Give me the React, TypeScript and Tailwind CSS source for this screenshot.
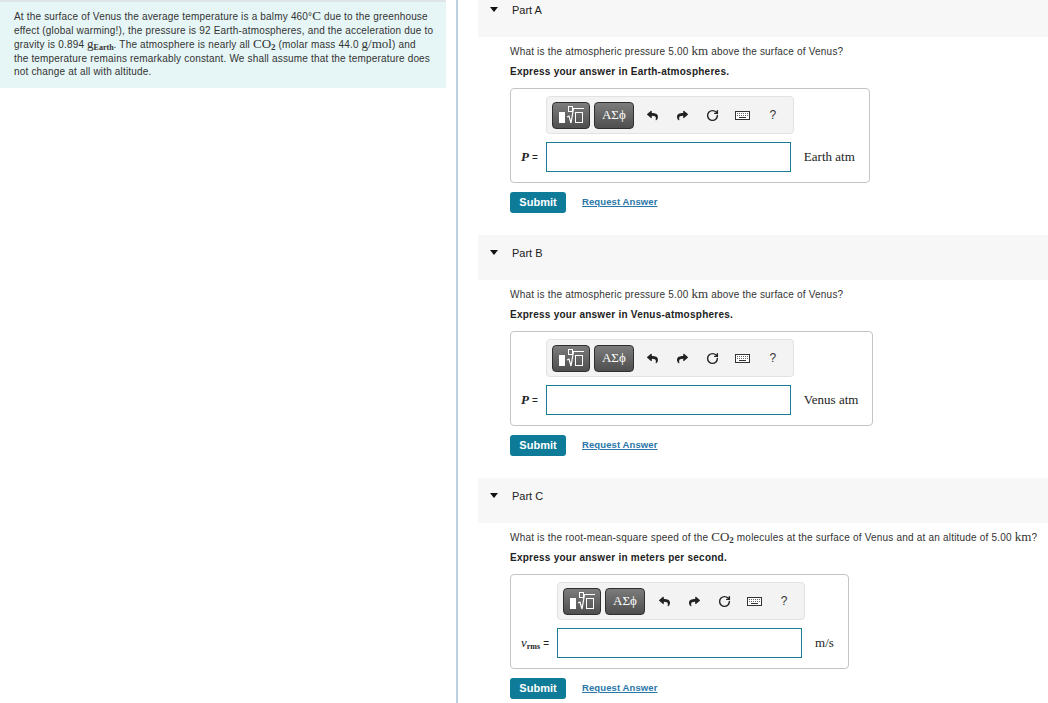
import type { ReactNode } from 'react';
import { FaReply, FaShare } from 'react-icons/fa';
import { RotateCw } from 'lucide-react';

const serif = "font-['Liberation_Serif','DejaVu_Serif',serif]";

function M({ children }: { children: ReactNode }) {
  return <span className={`${serif} text-[13px] leading-[10px] tracking-normal`}>{children}</span>;
}

function RadicalIcon() {
  return (
    <svg width="28" height="20" viewBox="0 0 28 20" fill="none">
      <rect x="2" y="7" width="6" height="11" fill="#fff" />
      <rect x="11.5" y="1.5" width="4" height="5" stroke="#fff" strokeWidth="1" />
      <path d="M10 12 L12 11 L14 18 L16.5 3.5 L27 3.5" stroke="#fff" strokeWidth="1.2" />
      <rect x="18.5" y="7.5" width="7" height="10" stroke="#fff" strokeWidth="1" />
    </svg>
  );
}

function KeyboardIcon() {
  return (
    <svg width="15" height="9" viewBox="0 0 15 9" fill="none">
      <rect x="0.5" y="0.5" width="14" height="8" stroke="#333" strokeWidth="1" fill="#fff" />
      <path d="M2 2.5h11M2 4.5h11" stroke="#666" strokeWidth="1" strokeDasharray="1 1" />
      <path d="M4 6.5h7" stroke="#333" strokeWidth="1" />
    </svg>
  );
}

function Toolbar() {
  const btn =
    'flex h-[27px] items-center justify-center rounded-[4px] border border-[#2f2f2f] bg-gradient-to-b from-[#7c7c7c] to-[#4f4f4f]';
  return (
    <div className="flex h-[38px] w-[248px] items-center rounded-[4px] border border-[#e2e2e2] bg-[#f3f3f3] pl-[5px]">
      <div className={`${btn} w-[38px]`}>
        <RadicalIcon />
      </div>
      <div className={`${btn} ml-[4px] w-[40px]`}>
        <span className={`${serif} text-[13px] text-white`}>ΑΣϕ</span>
      </div>
      <div className="ml-[4px] flex items-center">
        <span className="flex w-[30px] justify-center">
          <FaReply size={11} color="#222" />
        </span>
        <span className="flex w-[30px] justify-center">
          <FaShare size={11} color="#222" />
        </span>
        <span className="flex w-[30px] justify-center">
          <RotateCw size={13} strokeWidth={2.6} color="#222" />
        </span>
        <span className="flex w-[30px] justify-center">
          <KeyboardIcon />
        </span>
        <span className="flex w-[30px] justify-center text-[12px] text-[#333]">?</span>
      </div>
    </div>
  );
}

type Part = {
  label: string;
  question: ReactNode;
  express: string;
  variable: ReactNode;
  unit: ReactNode;
};

const parts: Part[] = [
  {
    label: 'Part A',
    question: (
      <>
        What is the atmospheric pressure 5.00 <M>km</M> above the surface of Venus?
      </>
    ),
    express: 'Express your answer in Earth-atmospheres.',
    variable: <i className={`${serif} text-[13px] font-bold`}>P</i>,
    unit: 'Earth atm',
  },
  {
    label: 'Part B',
    question: (
      <>
        What is the atmospheric pressure 5.00 <M>km</M> above the surface of Venus?
      </>
    ),
    express: 'Express your answer in Venus-atmospheres.',
    variable: <i className={`${serif} text-[13px] font-bold`}>P</i>,
    unit: 'Venus atm',
  },
  {
    label: 'Part C',
    question: (
      <>
        What is the root-mean-square speed of the{' '}
        <M>
          CO<sub className="text-[9px] font-bold">2</sub>
        </M>{' '}
        molecules at the surface of Venus and at an altitude of 5.00 <M>km</M>?
      </>
    ),
    express: 'Express your answer in meters per second.',
    variable: (
      <span className={`${serif}`}>
        <i className="text-[13px]">v</i>
        <sub className="text-[8px] font-bold">rms</sub>
      </span>
    ),
    unit: 'm/s',
  },
];

function PartBlock({ part, first }: { part: Part; first: boolean }) {
  return (
    <section className={first ? '-mt-2' : ''}>
      <div className="flex h-[45px] items-start bg-[#f7f7f7] pt-[11px]">
        <span className="ml-[12px] mt-[4px] h-0 w-0 border-x-[4px] border-t-[5px] border-x-transparent border-t-[#111]" />
        <span className="ml-[14px] text-[11px] leading-[14px] text-[#222]">{part.label}</span>
      </div>

      <div className="pl-[32px] pb-[22px]">
        <p className="mt-[8px] h-[13px] text-[10px] leading-[13px] tracking-[0.2px] text-[#333]">
          {part.question}
        </p>
        <p className="mt-[7px] text-[10px] font-bold leading-[13px] tracking-[0.25px] text-[#222]">
          {part.express}
        </p>

        <div className="mt-[10px] inline-grid grid-cols-[auto_auto_auto] items-center gap-y-[8px] rounded-[4px] border border-[#c4c4c4] pb-[10px] pl-[10px] pr-[14px] pt-[7px]">
          <div />
          <div className="col-start-2">
            <Toolbar />
          </div>
          <div />
          <div className="pr-[8px] text-[11px] text-[#222]">
            {part.variable} <span className="text-[10px]">=</span>
          </div>
          <div className="h-[30px] w-[245px] border border-[#1b7c95] bg-white" />
          <div className={`${serif} pl-[10px] text-[13px] text-[#222]`}>{part.unit}</div>
        </div>

        <div className="mt-[9px] flex items-center">
          <button className="h-[21px] w-[56px] rounded-[3px] bg-[#0e7b98] text-[11px] font-bold text-white">
            Submit
          </button>
          <a className="ml-[16px] text-[9.5px] font-bold tracking-[0.1px] text-[#2a76a8] underline">
            Request Answer
          </a>
        </div>
      </div>
    </section>
  );
}

export default function App() {
  return (
    <div className="flex min-h-[703px] w-[1048px] overflow-hidden bg-white font-['Liberation_Sans',Arial,sans-serif]">
      <aside className="w-[446px] shrink-0">
        <div className="whitespace-nowrap border-t-2 border-[#dfe5e6] bg-[#e6f6f6] px-[14px] pb-[9px] pt-[8px] text-[10px] leading-[13.5px] tracking-[0.18px] text-[#333]">
          At the surface of Venus the average temperature is a balmy 460°<M>C</M> due to the greenhouse
          <br />
          effect (global warming!), the pressure is 92 Earth-atmospheres, and the acceleration due to
          <br />
          gravity is 0.894{' '}
          <span className={`${serif} tracking-normal`}>
            <span className="text-[13px]">g</span>
            <sub className="text-[8px] font-bold">Earth</sub>
          </span>
          . The atmosphere is nearly all{' '}
          <M>
            CO<sub className="text-[9px] font-bold">2</sub>
          </M>{' '}
          (molar mass 44.0 <M>g/mol</M>) and
          <br />
          the temperature remains remarkably constant. We shall assume that the temperature does
          <br />
          not change at all with altitude.
        </div>
      </aside>

      <div className="ml-[10px] w-[2px] shrink-0 bg-[#bcd2e2]" />

      <main className="flex-1 pl-[20px]">
        {parts.map((p, i) => (
          <PartBlock key={p.label} part={p} first={i === 0} />
        ))}
      </main>
    </div>
  );
}
